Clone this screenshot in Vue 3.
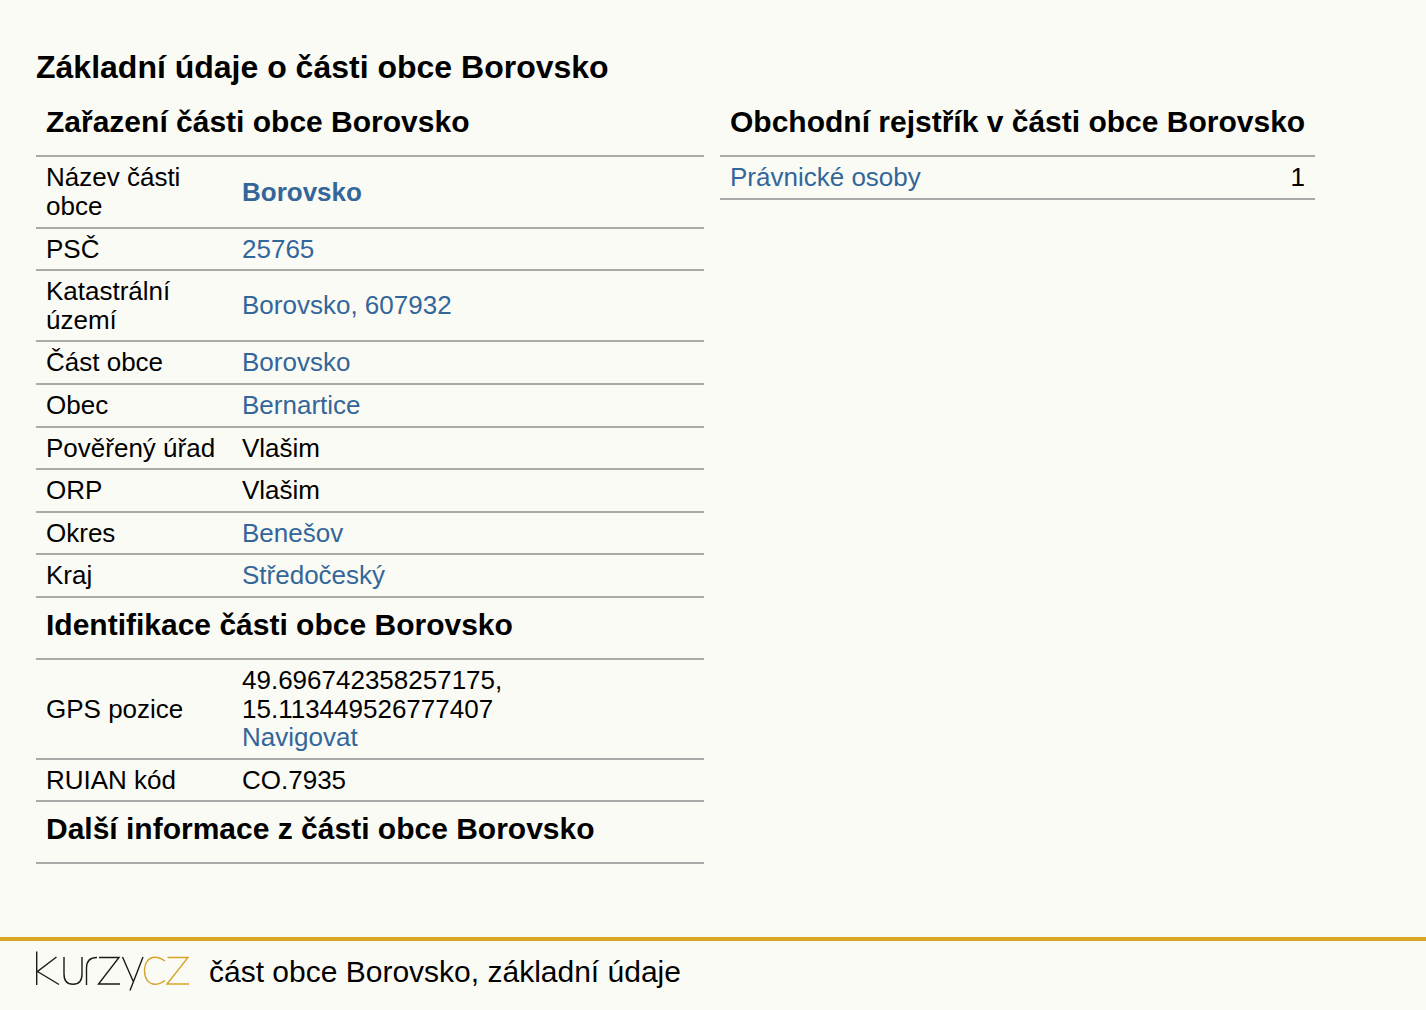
<template>
  <div class="page">
    <h1>Základní údaje o části obce Borovsko</h1>
    <div class="cols">
      <section class="left">
        <h2>Zařazení části obce Borovsko</h2>
        <div class="row two" v-for="r in a" :key="r.k">
          <div class="k">{{ r.k }}</div>
          <div class="v"><span :class="{ link: r.l, strong: r.s }">{{ r.v }}</span></div>
        </div>
        <h3>Identifikace části obce Borovsko</h3>
        <div class="row">
          <div class="k">GPS pozice</div>
          <div class="v">49.696742358257175,<br />15.113449526777407<br /><span class="link">Navigovat</span></div>
        </div>
        <div class="row">
          <div class="k">RUIAN kód</div>
          <div class="v">CO.7935</div>
        </div>
        <h3>Další informace z části obce Borovsko</h3>
      </section>
      <section class="right">
        <h2>Obchodní rejstřík v části obce Borovsko</h2>
        <div class="rrow"><span class="link">Právnické osoby</span><span>1</span></div>
      </section>
    </div>
    <footer>
      <svg class="logo" width="155" height="42" viewBox="35 950 155 42" fill="none" stroke-width="1.4">
        <g stroke="#1a1a1a">
          <path d="M36.7 951.5V985M56.5 957 37.5 971.5 59 984.5" />
          <path d="M64 957V974Q64 984.3 73 984.3Q82 984.3 82 974V957" />
          <path d="M86.500 985V968Q86.500 957.500 97 957.500" />
          <path d="M99 957.500H119L98.500 984H120" />
          <path d="M122.500 957 133.500 982M143 957 130 990.500" />
        </g>
        <g stroke="#d4a32a">
          <path d="M165 961C161.500 958.500 158.500 957.300 155 957.300C148.500 957.300 144.500 963 144.500 970.800C144.500 978.500 148.500 984.300 155 984.300C158.500 984.300 161.500 983 165 980.500" />
          <path d="M167.500 957.500H188L167 984H189" />
        </g>
      </svg>
      <span>část obce Borovsko, základní údaje</span>
    </footer>
  </div>
</template>

<script setup>
const a = [
  { k: 'Název části obce', v: 'Borovsko', l: true, s: true },
  { k: 'PSČ', v: '25765', l: true },
  { k: 'Katastrální území', v: 'Borovsko, 607932', l: true },
  { k: 'Část obce', v: 'Borovsko', l: true },
  { k: 'Obec', v: 'Bernartice', l: true },
  { k: 'Pověřený úřad', v: 'Vlašim' },
  { k: 'ORP', v: 'Vlašim' },
  { k: 'Okres', v: 'Benešov', l: true },
  { k: 'Kraj', v: 'Středočeský', l: true },
]
</script>

<style>
body { margin: 0; background: #fbfbf6; }
</style>

<style scoped>
.page {
  height: 1010px;
  box-sizing: border-box;
  padding-top: 49px;
  font-family: "Liberation Sans", Arial, sans-serif;
  font-size: 26px;
  line-height: 28.6px;
  color: #000;
  display: flex;
  flex-direction: column;
  overflow: hidden;
}
h1 { margin: 0 0 0 36px; font-size: 32px; line-height: 37px; font-weight: 700; }
.cols { display: flex; margin-left: 36px; gap: 16px; flex: 1; margin-top: 19px; }
.left { width: 668px; }
.right { width: 595px; }
h2 { margin: 0; padding: 0 10px; font-size: 30px; line-height: 34px; height: 52.4px; box-sizing: border-box; font-weight: 700; border-bottom: 2px solid #aaa; white-space: nowrap; }
h3 { margin: 0; padding: 10px 10px 0; font-size: 30px; line-height: 34px; height: 62px; box-sizing: border-box; font-weight: 700; border-bottom: 2px solid #aaa; }
.row { display: flex; align-items: center; border-bottom: 2px solid #aaa; padding: 6px 10px; }
.k { width: 196px; flex: none; }
.v { flex: 1; }
.link { color: #336699; }
.strong { font-weight: 700; }
.rrow { display: flex; justify-content: space-between; padding: 6px 10px; border-bottom: 2px solid #aaa; }
footer { height: 73px; box-sizing: border-box; border-top: 4px solid #d8a726; display: flex; align-items: flex-start; padding: 9px 0 0 35px; font-size: 30px; line-height: 44px; gap: 19px; }
.logo { flex: none; }
</style>
